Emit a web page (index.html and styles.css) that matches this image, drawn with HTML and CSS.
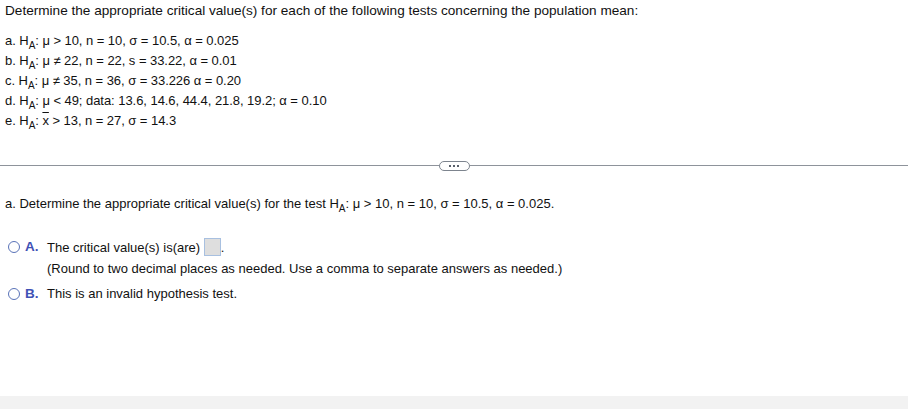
FILE: index.html
```html
<!DOCTYPE html>
<html>
<head>
<meta charset="utf-8">
<link rel="stylesheet" href="styles.css">
</head>
<body>
<div class="page">
  <div class="question">
    <p class="intro">Determine the appropriate critical value(s) for each of the following tests concerning the population mean:</p>
    <div class="items">
      <div class="item">a. H<sub>A</sub>: μ &gt; 10, n = 10, σ = 10.5, α = 0.025</div>
      <div class="item">b. H<sub>A</sub>: μ ≠ 22, n = 22, s = 33.22, α = 0.01</div>
      <div class="item">c. H<sub>A</sub>: μ ≠ 35, n = 36, σ = 33.226 α = 0.20</div>
      <div class="item">d. H<sub>A</sub>: μ &lt; 49; data: 13.6, 14.6, 44.4, 21.8, 19.2; α = 0.10</div>
      <div class="item">e. H<sub>A</sub>: <span class="xbar">x</span> &gt; 13, n = 27, σ = 14.3</div>
    </div>
  </div>
  <div class="divider">
    <span class="rule"></span>
    <span class="more"><i></i><i></i><i></i></span>
    <span class="rule"></span>
  </div>
  <div class="part">
    <p class="prompt">a. Determine the appropriate critical value(s) for the test H<sub>A</sub>: μ &gt; 10, n = 10, σ = 10.5, α = 0.025.</p>
    <div class="choices">
      <div class="choice">
        <span class="radio"></span>
        <span class="letter">A.</span>
        <div class="body">
          <div class="line">The critical value(s) is(are) <span class="box"></span>.</div>
          <div class="hint">(Round to two decimal places as needed. Use a comma to separate answers as needed.)</div>
        </div>
      </div>
      <div class="choice">
        <span class="radio"></span>
        <span class="letter">B.</span>
        <div class="body">
          <div class="line">This is an invalid hypothesis test.</div>
        </div>
      </div>
    </div>
  </div>
</div>
<div class="footer"></div>
</body>
</html>
```
FILE: styles.css
```css
html, body {
  margin: 0;
  padding: 0;
  background: #ffffff;
}
body {
  font-family: "Liberation Sans", Arial, sans-serif;
  font-size: 13px;
  color: #111111;
  width: 908px;
  height: 409px;
  display: flex;
  flex-direction: column;
}
.page {
  flex: 1;
}
p { margin: 0; }
sub {
  font-size: 10px;
  vertical-align: -4px;
  line-height: 0;
}
.question {
  padding: 3px 0 0 5px;
}
.intro {
  font-size: 13.6px;
  line-height: 15px;
}
.items {
  margin-top: 13px;
  display: flex;
  flex-direction: column;
}
.item {
  line-height: 20px;
  height: 20px;
  letter-spacing: -0.05px;
}
.xbar {
  text-decoration: overline;
  text-decoration-thickness: 1px;
}
.divider {
  margin-top: 29px;
  display: flex;
  align-items: center;
  height: 11px;
}
.rule {
  flex: 1;
  height: 1px;
  background: #8e939b;
}
.more {
  width: 29px;
  height: 8px;
  border: 1px solid #7d848e;
  border-radius: 5px;
  background: #fff;
  display: flex;
  align-items: center;
  justify-content: center;
  gap: 2px;
}
.more i {
  width: 2px;
  height: 2px;
  background: #59606b;
}
.part {
  padding-left: 5px;
}
.prompt {
  margin-top: 25px;
  line-height: 15px;
}
.choices {
  margin-top: 27px;
  display: flex;
  flex-direction: column;
  gap: 8px;
}
.choice {
  display: flex;
  align-items: flex-start;
}
.radio {
  width: 10px;
  height: 10px;
  border: 1.5px solid #5a73b8;
  border-radius: 50%;
  margin: 3px 0 0 3px;
  flex: none;
}
.letter {
  color: #3f51b5;
  font-weight: bold;
  font-size: 13.5px;
  width: 22px;
  padding-left: 5px;
  line-height: 17px;
  flex: none;
}
.line {
  line-height: 17px;
}
.hint {
  line-height: 17px;
  margin-top: 4px;
}
.box {
  display: inline-block;
  width: 15px;
  height: 16px;
  background: #dedede;
  border: 1px solid #a8c0e0;
  vertical-align: -4px;
}
.footer {
  height: 13px;
  background: #f2f2f2;
}
```
